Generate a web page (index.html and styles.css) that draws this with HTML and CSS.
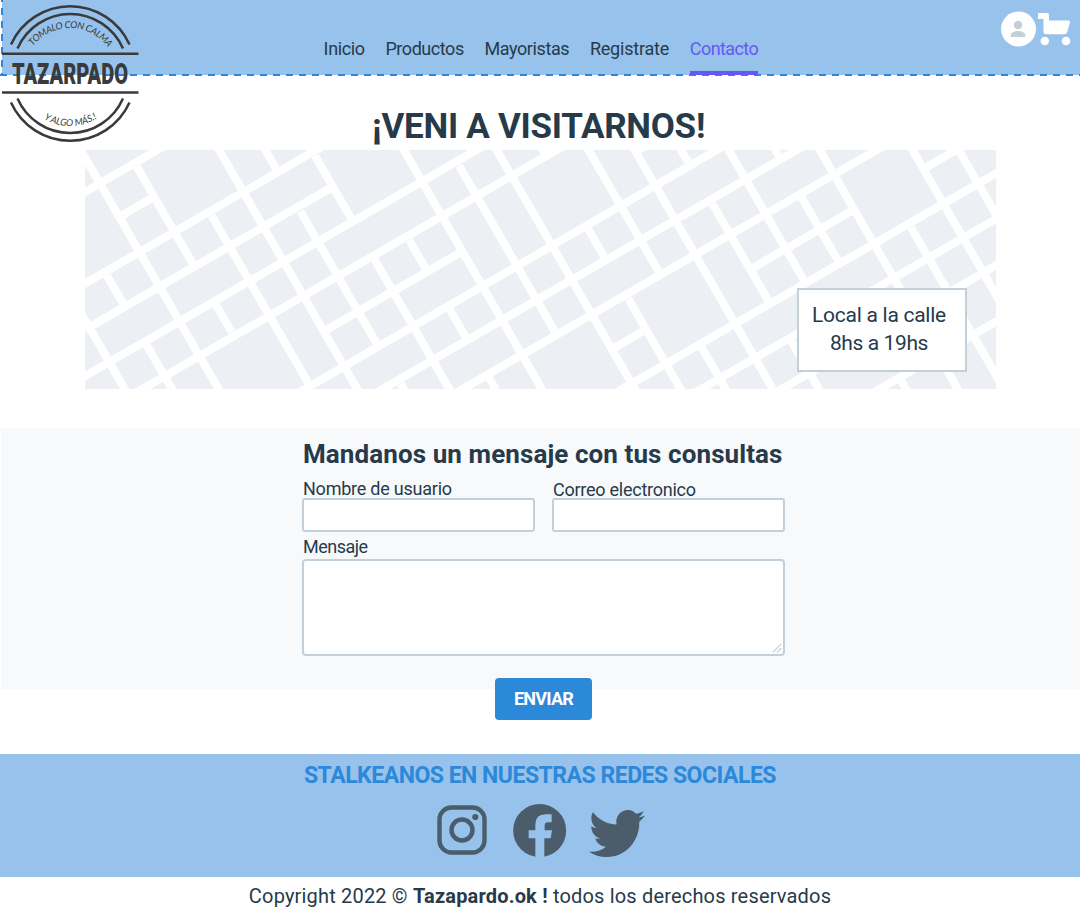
FILE: index.html
```
<!DOCTYPE html>
<html lang="es">
<head>
<meta charset="utf-8">
<title>Tazarpado - Contacto</title>
<link rel="stylesheet" href="styles.css">
</head>
<body>
<header class="header">
  <a class="logo" href="#">
    <svg width="142" height="146" viewBox="0 0 142 146">
      <defs>
        <path id="arc-top" d="M23 75A47 47 0 0 1 117 75"/>
        <path id="arc-bottom" d="M18 74A52 52 0 0 0 122 74"/>
      </defs>
      <g fill="none" stroke="#3a3a3c" stroke-width="2.500">
        <path d="M11 44.500A65 65 0 0 1 129.500 44.500M17.500 48.500A57.600 57.600 0 0 1 123 48.500M11 102.500A65 65 0 0 0 129.500 102.500M17.500 98.500A57.600 57.600 0 0 0 123 98.500M2 53.800H138.500M2 92.600H138.500"/>
      </g>
      <text class="logo-name" transform="translate(12 83.500) scale(1 1.430)" textLength="116" lengthAdjust="spacingAndGlyphs">TAZARPADO</text>
      <text class="logo-small"><textPath href="#arc-top" startOffset="31" textLength="87">TOMALO CON CALMA</textPath></text>
      <text class="logo-small"><textPath href="#arc-bottom" startOffset="54" textLength="56">Y ALGO MÁS.!</textPath></text>
    </svg>
  </a>
  <nav class="nav">
    <a class="n1" href="#">Inicio</a>
    <a class="n2" href="#">Productos</a>
    <a class="n3" href="#">Mayoristas</a>
    <a class="n4" href="#">Registrate</a>
    <a class="n5 active" href="#">Contacto</a>
  </nav>
  <div class="actions">
    <svg width="36" height="36" viewBox="0 0 36 36"><circle cx="18.500" cy="18" r="17.500" fill="#fff"/><circle cx="18" cy="14" r="4.200" fill="#c3cfd9"/><path d="M10.700 26V24.500C10.700 21.500 14.400 20 18 20S25.400 21.500 25.400 24.500V26Z" fill="#c3cfd9"/></svg>
    <svg width="34" height="34" viewBox="0 0 34 34" fill="#fff"><path d="M0 1H9Q11 1 11 3V8.500H30.500Q32.600 8.500 32 10.500L29 20.500Q28.500 22.300 26.500 22.300H8Q5.500 22.300 5.500 20V7H0Z"/><circle cx="6.800" cy="29" r="4.300"/><circle cx="28" cy="29" r="4.300"/></svg>
  </div>
</header>

<main>
  <section class="visit">
    <h1>¡VENI A VISITARNOS!</h1>
    <div class="map">
      <svg class="streets" width="911" height="239" viewBox="15 15 2733 717">
        <path d="M-10 155L260 -1M-10 430L750 -9M15 554L752 129M-10 708L1240 -14M100 782L1470 -8M600 776L1950 -8M740 554L1152 316M1667 20L1720 -11M880 748L2190 -8M1070 777L2430 -8M2015 371L2318 196M2530 72L2670 -9M1580 759L2800 55M1800 769L2800 192M2060 758L2800 331M2350 760L2800 500M125 212L216 159M1602 609L1693 556"/>
        <path d="M-5 3L427 752M169 63L344 366M-10 482L146 752M81 392L129 475M395 212L692 726M397 -20L843 752M536 -20L591 76M661 199L889 594M705 32L816 224M884 344L1119 751M408 480L455 561M200 600L288 753M951 -20L1397 752M1137 62L1425 560M1230 -20L1676 752M1369 -20L1394 24M988 286L1036 369M1109 493L1159 579M1227 698L1258 752M962 716L983 752M1505 -20L1741 388M1525 253L1574 338M1645 461L1813 752M1644 -20L2090 752M1783 -20L1829 60M1926 -20L2177 415M2066 -20L2098 35M2199 -20L2645 752M1897 176L2070 475M2165 158L2277 352M2477 -20L2923 752M2616 -20L2760 229M2493 248L2800 780M1864 606L1948 751M2135 590L2229 753M2460 700L2490 753"/>
      </svg>
      <p class="hours"><span>Local a la calle</span><br><span class="time">8hs a 19hs</span></p>
    </div>
  </section>

  <section class="contact">
    <form class="form">
      <h2>Mandanos un mensaje con tus consultas</h2>
      <div class="fields">
        <div class="field"><label class="l1" for="user">Nombre de usuario</label><input id="user" type="text"></div>
        <div class="field"><label class="l2" for="mail">Correo electronico</label><input id="mail" type="text"></div>
      </div>
      <label class="l3" for="msg">Mensaje</label>
      <div class="area">
        <textarea id="msg"></textarea>
        <svg class="grip" width="10" height="10" viewBox="0 0 10 10"><path d="M.7 9.300L9.300.7M5 9.300L9.300 5" stroke="#c3cfd9" stroke-width="1.200"/></svg>
      </div>
      <button type="button">ENVIAR</button>
    </form>
  </section>
</main>

<footer>
  <div class="social">
    <h3>STALKEANOS EN NUESTRAS REDES SOCIALES</h3>
    <div class="icons">
      <svg width="50" height="50" viewBox="0 0 50 50"><rect x="2.500" y="2.500" width="45" height="45" rx="12" fill="none" stroke="#4b5c6b" stroke-width="4.400"/><circle cx="25" cy="25" r="10.500" fill="none" stroke="#4b5c6b" stroke-width="4.400"/><circle cx="38.300" cy="12" r="3.100" fill="#4b5c6b"/></svg>
      <svg width="54" height="54" viewBox="0 0 162 162"><circle cx="80" cy="79.500" r="79.500" fill="#4b5c6b"/><path d="M67 162V103H47V79H67V62Q67 31 98 31H116V55H106Q95 55 95 65V79H117L113 103H94V162Z" fill="#96c2eb"/></svg>
      <svg class="bird" width="56" height="47" viewBox="0 48 512 416" preserveAspectRatio="none"><path fill="#4b5c6b" d="M459.370 151.716c.325 4.548.325 9.097.325 13.645 0 138.720-105.583 298.558-298.558 298.558-59.452 0-114.680-17.219-161.137-47.106 8.447.974 16.568 1.299 25.340 1.299 49.055 0 94.213-16.568 130.274-44.832-46.132-.975-84.792-31.188-98.112-72.772 6.498.974 12.995 1.624 19.818 1.624 9.421 0 18.843-1.300 27.614-3.573-48.081-9.747-84.143-51.980-84.143-102.985v-1.299c13.969 7.797 30.214 12.670 47.431 13.319-28.264-18.843-46.781-51.005-46.781-87.391 0-19.492 5.197-37.360 14.294-52.954 51.655 63.675 129.300 105.258 216.365 109.807-1.624-7.797-2.599-15.918-2.599-24.040 0-57.828 46.782-104.934 104.934-104.934 30.213 0 57.502 12.670 76.670 33.137 23.715-4.548 46.456-13.320 66.599-25.340-7.798 24.366-24.366 44.833-46.132 57.827 21.117-2.273 41.584-8.122 60.426-16.243-14.292 20.791-32.161 39.308-52.628 54.253z"/></svg>
    </div>
  </div>
  <p class="copy">Copyright 2022 © <b>Tazapardo.ok !</b> todos los derechos reservados</p>
</footer>
</body>
</html>
```
FILE: styles.css
```
* { box-sizing: border-box; }
body {
  margin: 0;
  background: #fff;
  color: #273a4a;
  font-family: Roboto, "Liberation Sans", sans-serif;
  font-size: 18px;
}
h1, h2, h3, p { margin: 0; white-space: nowrap; }
svg { display: block; }

.header {
  position: relative;
  display: flex;
  justify-content: space-between;
  height: 76px;
  background:
    repeating-linear-gradient(90deg, #2c88d9 0 7px, transparent 7px 13px) 0 74px / 100% 2px no-repeat,
    repeating-linear-gradient(180deg, #2c88d9 0 7px, transparent 7px 13px) 1px -5px / 2px 81px no-repeat,
    linear-gradient(#96c2eb, #96c2eb) 2px 0 / 100% 75px no-repeat;
}
.logo { position: absolute; left: 0; top: 0; }
.logo svg { overflow: visible; }
.logo-name { font: 900 21px Roboto, sans-serif; fill: #3a3a3c; }
.logo-small { font: italic 9.5px Lato, sans-serif; fill: #3a3a3c; }
.nav {
  display: flex;
  gap: 20.7px;
  margin-left: 323.6px;
}
.nav a {
  height: 76px;
  padding-top: 36px;
  line-height: 26px;
  color: #273a4a;
  text-decoration: none;
  white-space: nowrap;
}
.n1 { letter-spacing: -.35px; }
.n2 { letter-spacing: -.45px; }
.n3 { letter-spacing: -.4px; }
.n4 { letter-spacing: -.2px; }
.n5 { width: 68px; letter-spacing: -.6px; }
.nav .active {
  height: 75px;
  color: #6558f5;
  border-bottom: 4px solid #6558f5;
}
.actions { display: flex; gap: 2px; padding: 11px 8px 0 0; }
.actions svg + svg { margin-top: 1px; }

.visit {
  display: flex;
  flex-direction: column;
  padding: 28px 84px 39px 85px;
}
h1 {
  height: 46px;
  padding-right: 4px;
  font-size: 35px;
  line-height: 46px;
  letter-spacing: -.27px;
  text-align: center;
}
.map {
  display: flex;
  position: relative;
  justify-content: flex-end;
  align-items: flex-end;
  height: 239px;
  padding: 0 29px 17px 0;
  background: #ecf0f5;
}
.streets { position: absolute; inset: 0; fill: none; stroke: #fff; stroke-width: 24px; }
.hours {
  position: relative;
  width: 170px;
  height: 84px;
  padding: 11px 6px 0 0;
  background: #fff;
  border: 2px solid #c3cfd9;
  font-size: 21px;
  line-height: 28px;
  letter-spacing: -.27px;
  text-align: center;
}
.time { letter-spacing: -.4px; }

.contact { height: 261px; margin-left: 1px; background: #f8f9fb; }
.form {
  display: flex;
  flex-direction: column;
  width: 483px;
  margin-left: 301px;
  padding-top: 10px;
}
h2 { height: 39px; padding-left: 1px; font-size: 26px; line-height: 32px; letter-spacing: .09px; }
.fields { display: flex; gap: 17px; }
.field { display: flex; flex-direction: column; width: 233px; }
label { height: 21px; padding-left: 1px; line-height: 24px; white-space: nowrap; }
.l1 { letter-spacing: -.23px; }
.l2 { line-height: 26px; letter-spacing: -.25px; }
.l3 { height: 27px; line-height: 30px; letter-spacing: -.5px; }
input, textarea {
  display: block;
  width: 100%;
  height: 34px;
  border: 2px solid #c3cfd9;
  border-radius: 3px;
  background: #fff;
}
.area { position: relative; }
textarea { height: 97px; border-radius: 4px; resize: none; }
.grip { position: absolute; right: 3px; bottom: 3px; }
button {
  align-self: center;
  width: 97px;
  height: 42px;
  margin-top: 22px;
  padding: 0 0 2px;
  border: 0;
  border-radius: 4px;
  background: #2c88d9;
  color: #fff;
  font: bold 18px Roboto, sans-serif;
  letter-spacing: -.75px;
}

footer { margin-top: 65px; }
.social { height: 123px; padding-top: 7px; background: #96c2eb; }
h3 { color: #2c88d9; font-size: 23px; line-height: 30px; letter-spacing: -.49px; text-align: center; }
.icons { display: flex; gap: 26px; margin: 13px 0 0 437px; }
.icons svg:first-child { margin-top: 1px; }
.icons .bird { margin: 6px 0 0 -4px; }
.copy { font-size: 20px; line-height: 38px; letter-spacing: .18px; text-align: center; }
```
